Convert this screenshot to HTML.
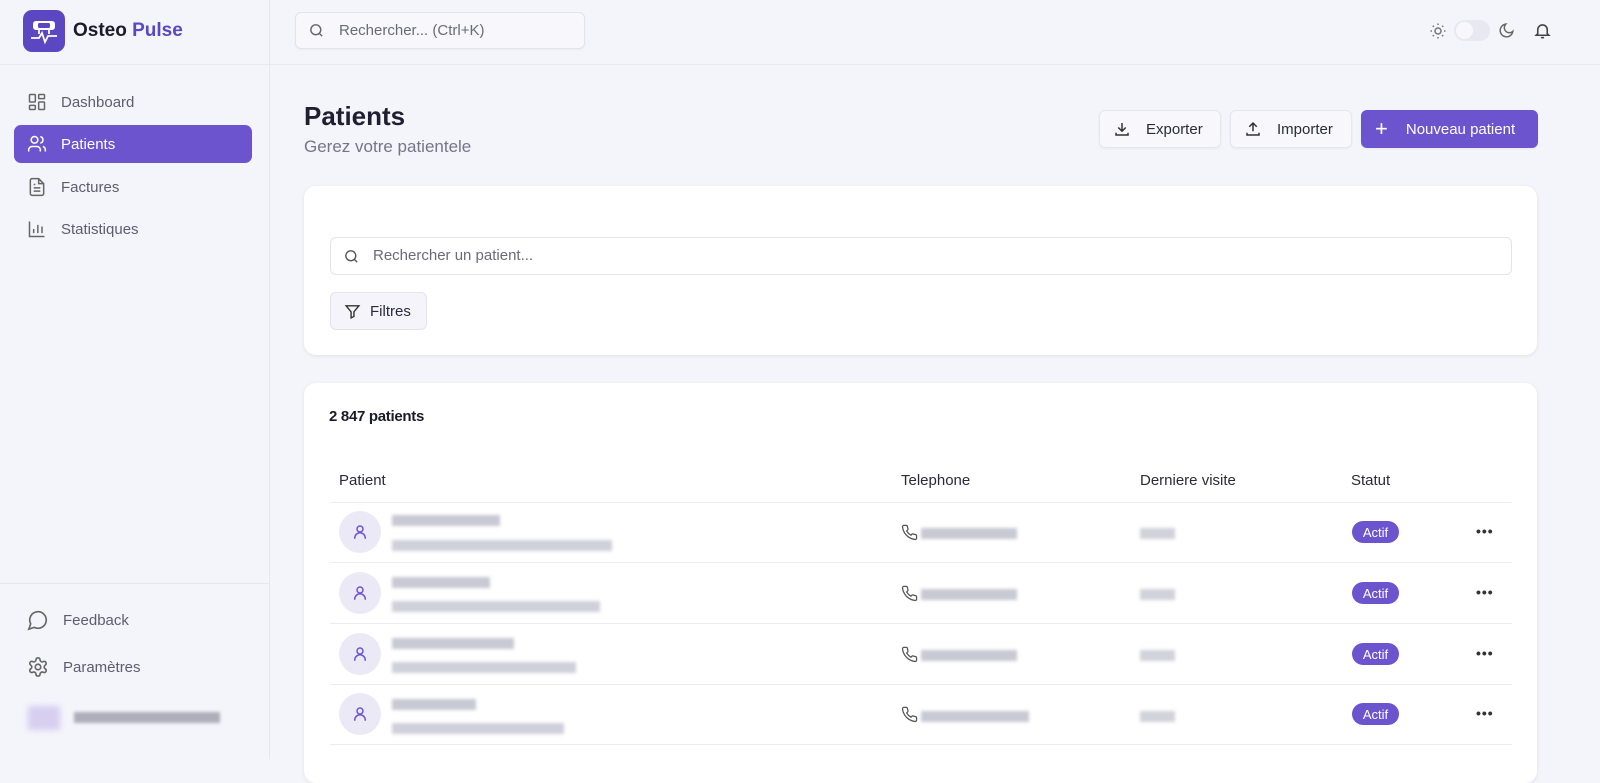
<!DOCTYPE html>
<html><head><meta charset="utf-8"><style>
*{box-sizing:border-box;margin:0;padding:0}
body{width:1600px;height:759px;overflow:hidden;background:#f4f4fb;font-family:"Liberation Sans",sans-serif;color:#2a2a3a;position:relative}
.abs{position:absolute}
.side{left:0;top:0;width:270px;height:759px;border-right:1px solid #e6e6ef;background:#f4f4fb}
.nav{position:absolute;left:14px;width:238px;height:38px;border-radius:7px;display:flex;align-items:center;padding-left:13px;font-size:15px;color:#5d5d70}
.nav svg{margin-right:14px}
.nav.act{background:#6d54cf;color:#fff}
.btn{position:absolute;height:38px;border-radius:6px;display:flex;align-items:center;font-size:15px;background:#f8f8fc;border:1px solid #e6e6ef;box-shadow:0 1px 2px rgba(0,0,0,.05);color:#2a2a3a}
.card{position:absolute;background:#fff;border-radius:12px;box-shadow:0 1px 4px rgba(0,0,0,.08)}
.bl{position:absolute;background:#c9c9d3;filter:blur(1.5px);height:11px}
.av{position:absolute;left:339px;width:42px;height:42px;border-radius:50%;background:#ece9f7;display:flex;align-items:center;justify-content:center}
.badge{position:absolute;left:1352px;width:47px;height:22px;border-radius:11px;background:#6d54cf;color:#fff;font-size:13px;display:flex;align-items:center;justify-content:center}
.dots{position:absolute;left:1476px;font-size:14px;font-weight:bold;color:#333;letter-spacing:1px}
.line{position:absolute;left:330px;width:1182px;height:1px;background:#ececf2}
</style></head><body>
<div class="abs side"></div>
<div class="abs" style="left:0;top:64px;width:1600px;height:1px;background:#e8e8f0"></div>
<!-- logo -->
<div class="abs" style="left:23px;top:10px;width:42px;height:42px;border-radius:9px;background:#5b47c2">
<svg width="42" height="42" viewBox="0 0 42 42"><rect x="10" y="11" width="22" height="9" rx="3" fill="#fff"/><rect x="15" y="13" width="12" height="5" rx="1.5" fill="#5b47c2"/><path d="M8 28h8l3-5 3 9 3-6h9" stroke="#fff" stroke-width="1.8" fill="none"/><path d="M16 20v4M26 20v4" stroke="#fff" stroke-width="1.8"/></svg></div>
<div class="abs" style="left:73px;top:20px;font-size:19px;font-weight:bold;color:#1b1b2a">Osteo <span style="color:#5b47c2">Pulse</span></div>
<!-- search -->
<div class="abs" style="left:295px;top:12px;width:290px;height:37px;border:1px solid #e3e3ec;border-radius:6px;background:#f7f7fc;box-shadow:0 1px 2px rgba(0,0,0,.04)"></div>
<svg class="abs" style="left:308px;top:22px" width="17" height="17" viewBox="0 0 24 24" fill="none" stroke="#666" stroke-width="2"><circle cx="11" cy="11" r="7"/><path d="M20 20l-4-4"/></svg>
<div class="abs" style="left:339px;top:22px;font-size:15px;color:#6a6a7a">Rechercher... (Ctrl+K)</div>
<!-- top right -->
<svg class="abs" style="left:1429px;top:22px" width="18" height="18" viewBox="0 0 24 24" fill="none" stroke="#777" stroke-width="2"><circle cx="12" cy="12" r="4"/><path d="M12 2v2M12 20v2M2 12h2M20 12h2M5 5l1.5 1.5M17.5 17.5L19 19M5 19l1.5-1.5M17.5 6.5L19 5"/></svg>
<div class="abs" style="left:1454px;top:20px;width:36px;height:21px;border-radius:11px;background:#e8e8f0"><div style="position:absolute;left:2px;top:2px;width:17px;height:17px;border-radius:50%;background:#f8f8fc"></div></div>
<svg class="abs" style="left:1498px;top:22px" width="17" height="17" viewBox="0 0 24 24" fill="none" stroke="#666" stroke-width="2"><path d="M21 13A9 9 0 1 1 11 3a7 7 0 0 0 10 10z"/></svg>
<svg class="abs" style="left:1533px;top:21px" width="19" height="19" viewBox="0 0 24 24" fill="none" stroke="#444" stroke-width="2"><path d="M6 16V11a6 6 0 0 1 12 0v5l2 2H4z"/><path d="M10 21h4"/></svg>
<!-- nav -->
<div class="nav" style="top:83px"><svg width="20" height="20" viewBox="0 0 24 24" fill="none" stroke="#666" stroke-width="1.8"><rect x="3" y="3" width="7" height="9" rx="1"/><rect x="14" y="3" width="7" height="5" rx="1"/><rect x="14" y="12" width="7" height="9" rx="1"/><rect x="3" y="16" width="7" height="5" rx="1"/></svg>Dashboard</div>
<div class="nav act" style="top:125px"><svg width="20" height="20" viewBox="0 0 24 24" fill="none" stroke="#fff" stroke-width="1.8"><circle cx="9" cy="7" r="4"/><path d="M2 21v-2a4 4 0 0 1 4-4h6a4 4 0 0 1 4 4v2M16 3.1a4 4 0 0 1 0 7.8M22 21v-2a4 4 0 0 0-3-3.9"/></svg>Patients</div>
<div class="nav" style="top:168px"><svg width="20" height="20" viewBox="0 0 24 24" fill="none" stroke="#666" stroke-width="1.8"><path d="M14 2H6a2 2 0 0 0-2 2v16a2 2 0 0 0 2 2h12a2 2 0 0 0 2-2V8z"/><path d="M14 2v6h6M8 13h8M8 17h8M8 9h2"/></svg>Factures</div>
<div class="nav" style="top:210px"><svg width="20" height="20" viewBox="0 0 24 24" fill="none" stroke="#666" stroke-width="1.8"><path d="M3 3v18h18M8 17v-5M13 17V7M18 17v-8"/></svg>Statistiques</div>
<div class="abs" style="left:0;top:583px;width:269px;height:1px;background:#e6e6ef"></div>
<div class="nav" style="top:601px"><svg width="22" height="22" viewBox="0 0 24 24" fill="none" stroke="#666" stroke-width="1.8"><path d="M7.9 20A9 9 0 1 0 4 16.1L2 22z"/></svg>Feedback</div>
<div class="nav" style="top:648px"><svg width="22" height="22" viewBox="0 0 24 24" fill="none" stroke="#666" stroke-width="1.8"><circle cx="12" cy="12" r="3"/><path d="M12.2 2h-.4a2 2 0 0 0-2 2v.2a2 2 0 0 1-1 1.7l-.4.3a2 2 0 0 1-2 0l-.2-.1a2 2 0 0 0-2.7.7l-.2.4a2 2 0 0 0 .7 2.7l.2.1a2 2 0 0 1 1 1.7v.5a2 2 0 0 1-1 1.7l-.2.1a2 2 0 0 0-.7 2.7l.2.4a2 2 0 0 0 2.7.7l.2-.1a2 2 0 0 1 2 0l.4.3a2 2 0 0 1 1 1.7v.2a2 2 0 0 0 2 2h.4a2 2 0 0 0 2-2v-.2a2 2 0 0 1 1-1.7l.4-.3a2 2 0 0 1 2 0l.2.1a2 2 0 0 0 2.7-.7l.2-.4a2 2 0 0 0-.7-2.7l-.2-.1a2 2 0 0 1-1-1.7v-.5a2 2 0 0 1 1-1.7l.2-.1a2 2 0 0 0 .7-2.7l-.2-.4a2 2 0 0 0-2.7-.7l-.2.1a2 2 0 0 1-2 0l-.4-.3a2 2 0 0 1-1-1.7V4a2 2 0 0 0-2-2z"/></svg>Paramètres</div>
<div class="abs" style="left:28px;top:706px;width:32px;height:24px;background:#d6cff0;filter:blur(3px)"></div>
<div class="bl" style="left:74px;top:712px;width:146px;background:#aeaebb"></div>
<!-- title -->
<div class="abs" style="left:304px;top:101px;font-size:26px;font-weight:bold;color:#1f1f33">Patients</div>
<div class="abs" style="left:304px;top:137px;font-size:17px;color:#75758a">Gerez votre patientele</div>
<div class="btn" style="left:1099px;width:122px;padding-left:13px"><svg width="18" height="18" viewBox="0 0 24 24" fill="none" stroke="#333" stroke-width="2"><path d="M12 4v11M7 10l5 5 5-5M4 17v3h16v-3"/></svg><span style="margin-left:15px">Exporter</span></div>
<div class="btn" style="left:1230px;width:122px;padding-left:13px"><svg width="18" height="18" viewBox="0 0 24 24" fill="none" stroke="#333" stroke-width="2"><path d="M12 15V4M7 9l5-5 5 5M4 17v3h16v-3"/></svg><span style="margin-left:15px">Importer</span></div>
<div class="btn" style="left:1361px;width:177px;padding-left:13px;background:#6d54cf;border-color:#6d54cf;color:#fff"><span style="font-size:22px;font-weight:300;line-height:1">+</span><span style="margin-left:18px">Nouveau patient</span></div>
<style>.btn{top:110px}</style>
<!-- filter card -->
<div class="card" style="left:304px;top:186px;width:1233px;height:169px"></div>
<div class="abs" style="left:330px;top:237px;width:1182px;height:38px;border:1px solid #e3e3ec;border-radius:6px"></div>
<svg class="abs" style="left:343px;top:248px" width="17" height="17" viewBox="0 0 24 24" fill="none" stroke="#555" stroke-width="2"><circle cx="11" cy="11" r="7"/><path d="M20 20l-4-4"/></svg>
<div class="abs" style="left:373px;top:247px;font-size:15px;color:#6a6a7a">Rechercher un patient...</div>
<div class="abs" style="left:330px;top:292px;width:97px;height:38px;border:1px solid #e3e3ec;border-radius:6px;background:#f4f4fa;display:flex;align-items:center;padding-left:13px;font-size:15px"><svg width="17" height="17" viewBox="0 0 24 24" fill="none" stroke="#333" stroke-width="2"><path d="M3 4h18l-7 8.5V19l-4 2v-8.5z"/></svg><span style="margin-left:9px">Filtres</span></div>
<!-- table card -->
<div class="card" style="left:304px;top:383px;width:1233px;height:400px"></div>
<div class="abs" style="left:329px;top:408px;font-size:15px;font-weight:bold;color:#1b1b2a;letter-spacing:-.3px">2 847 patients</div>
<div class="abs" style="left:339px;top:472px;font-size:15px;color:#2a2a3a">Patient</div>
<div class="abs" style="left:901px;top:472px;font-size:15px;color:#2a2a3a">Telephone</div>
<div class="abs" style="left:1140px;top:472px;font-size:15px;color:#2a2a3a">Derniere visite</div>
<div class="abs" style="left:1351px;top:472px;font-size:15px;color:#2a2a3a">Statut</div>
<div class="line" style="top:502px"></div>
<div class="line" style="top:562px"></div>
<div class="line" style="top:623px"></div>
<div class="line" style="top:684px"></div>
<div class="line" style="top:744px"></div>

<div id="rows"></div>
<!-- row 1 -->
<div class="av" style="top:511px"><svg width="18" height="18" viewBox="0 0 24 24" fill="none" stroke="#6d54cf" stroke-width="2"><circle cx="12" cy="8" r="4"/><path d="M5 21v-1a6 6 0 0 1 14 0v1"/></svg></div>
<div class="bl" style="left:392px;top:515px;width:108px"></div><div class="bl" style="left:392px;top:540px;width:220px;background:#d0d0da"></div>
<svg class="abs" style="left:901px;top:524px" width="17" height="17" viewBox="0 0 24 24" fill="none" stroke="#555" stroke-width="1.8"><path d="M22 16.9v3a2 2 0 0 1-2.2 2 19.8 19.8 0 0 1-8.6-3.1 19.5 19.5 0 0 1-6-6A19.8 19.8 0 0 1 2.1 4.2 2 2 0 0 1 4.1 2h3a2 2 0 0 1 2 1.7c.1 1 .4 1.9.7 2.8a2 2 0 0 1-.5 2.1L8 9.8a16 16 0 0 0 6 6l1.3-1.3a2 2 0 0 1 2.1-.4c.9.3 1.8.6 2.8.7a2 2 0 0 1 1.7 2z"/></svg>
<div class="bl" style="left:921px;top:528px;width:96px"></div><div class="bl" style="left:1140px;top:528px;width:35px;background:#d2d2da"></div>
<div class="badge" style="top:521px">Actif</div><div class="dots" style="top:523px">•••</div>
<!-- row 2 -->
<div class="av" style="top:572px"><svg width="18" height="18" viewBox="0 0 24 24" fill="none" stroke="#6d54cf" stroke-width="2"><circle cx="12" cy="8" r="4"/><path d="M5 21v-1a6 6 0 0 1 14 0v1"/></svg></div>
<div class="bl" style="left:392px;top:577px;width:98px"></div><div class="bl" style="left:392px;top:601px;width:208px;background:#d0d0da"></div>
<svg class="abs" style="left:901px;top:585px" width="17" height="17" viewBox="0 0 24 24" fill="none" stroke="#555" stroke-width="1.8"><path d="M22 16.9v3a2 2 0 0 1-2.2 2 19.8 19.8 0 0 1-8.6-3.1 19.5 19.5 0 0 1-6-6A19.8 19.8 0 0 1 2.1 4.2 2 2 0 0 1 4.1 2h3a2 2 0 0 1 2 1.7c.1 1 .4 1.9.7 2.8a2 2 0 0 1-.5 2.1L8 9.8a16 16 0 0 0 6 6l1.3-1.3a2 2 0 0 1 2.1-.4c.9.3 1.8.6 2.8.7a2 2 0 0 1 1.7 2z"/></svg>
<div class="bl" style="left:921px;top:589px;width:96px"></div><div class="bl" style="left:1140px;top:589px;width:35px;background:#d2d2da"></div>
<div class="badge" style="top:582px">Actif</div><div class="dots" style="top:584px">•••</div>
<!-- row 3 -->
<div class="av" style="top:633px"><svg width="18" height="18" viewBox="0 0 24 24" fill="none" stroke="#6d54cf" stroke-width="2"><circle cx="12" cy="8" r="4"/><path d="M5 21v-1a6 6 0 0 1 14 0v1"/></svg></div>
<div class="bl" style="left:392px;top:638px;width:122px"></div><div class="bl" style="left:392px;top:662px;width:184px;background:#d0d0da"></div>
<svg class="abs" style="left:901px;top:646px" width="17" height="17" viewBox="0 0 24 24" fill="none" stroke="#555" stroke-width="1.8"><path d="M22 16.9v3a2 2 0 0 1-2.2 2 19.8 19.8 0 0 1-8.6-3.1 19.5 19.5 0 0 1-6-6A19.8 19.8 0 0 1 2.1 4.2 2 2 0 0 1 4.1 2h3a2 2 0 0 1 2 1.7c.1 1 .4 1.9.7 2.8a2 2 0 0 1-.5 2.1L8 9.8a16 16 0 0 0 6 6l1.3-1.3a2 2 0 0 1 2.1-.4c.9.3 1.8.6 2.8.7a2 2 0 0 1 1.7 2z"/></svg>
<div class="bl" style="left:921px;top:650px;width:96px"></div><div class="bl" style="left:1140px;top:650px;width:35px;background:#d2d2da"></div>
<div class="badge" style="top:643px">Actif</div><div class="dots" style="top:645px">•••</div>
<!-- row 4 -->
<div class="av" style="top:693px"><svg width="18" height="18" viewBox="0 0 24 24" fill="none" stroke="#6d54cf" stroke-width="2"><circle cx="12" cy="8" r="4"/><path d="M5 21v-1a6 6 0 0 1 14 0v1"/></svg></div>
<div class="bl" style="left:392px;top:699px;width:84px"></div><div class="bl" style="left:392px;top:723px;width:172px;background:#d0d0da"></div>
<svg class="abs" style="left:901px;top:706px" width="17" height="17" viewBox="0 0 24 24" fill="none" stroke="#555" stroke-width="1.8"><path d="M22 16.9v3a2 2 0 0 1-2.2 2 19.8 19.8 0 0 1-8.6-3.1 19.5 19.5 0 0 1-6-6A19.8 19.8 0 0 1 2.1 4.2 2 2 0 0 1 4.1 2h3a2 2 0 0 1 2 1.7c.1 1 .4 1.9.7 2.8a2 2 0 0 1-.5 2.1L8 9.8a16 16 0 0 0 6 6l1.3-1.3a2 2 0 0 1 2.1-.4c.9.3 1.8.6 2.8.7a2 2 0 0 1 1.7 2z"/></svg>
<div class="bl" style="left:921px;top:711px;width:108px"></div><div class="bl" style="left:1140px;top:711px;width:35px;background:#d2d2da"></div>
<div class="badge" style="top:703px">Actif</div><div class="dots" style="top:705px">•••</div>
</body></html>
